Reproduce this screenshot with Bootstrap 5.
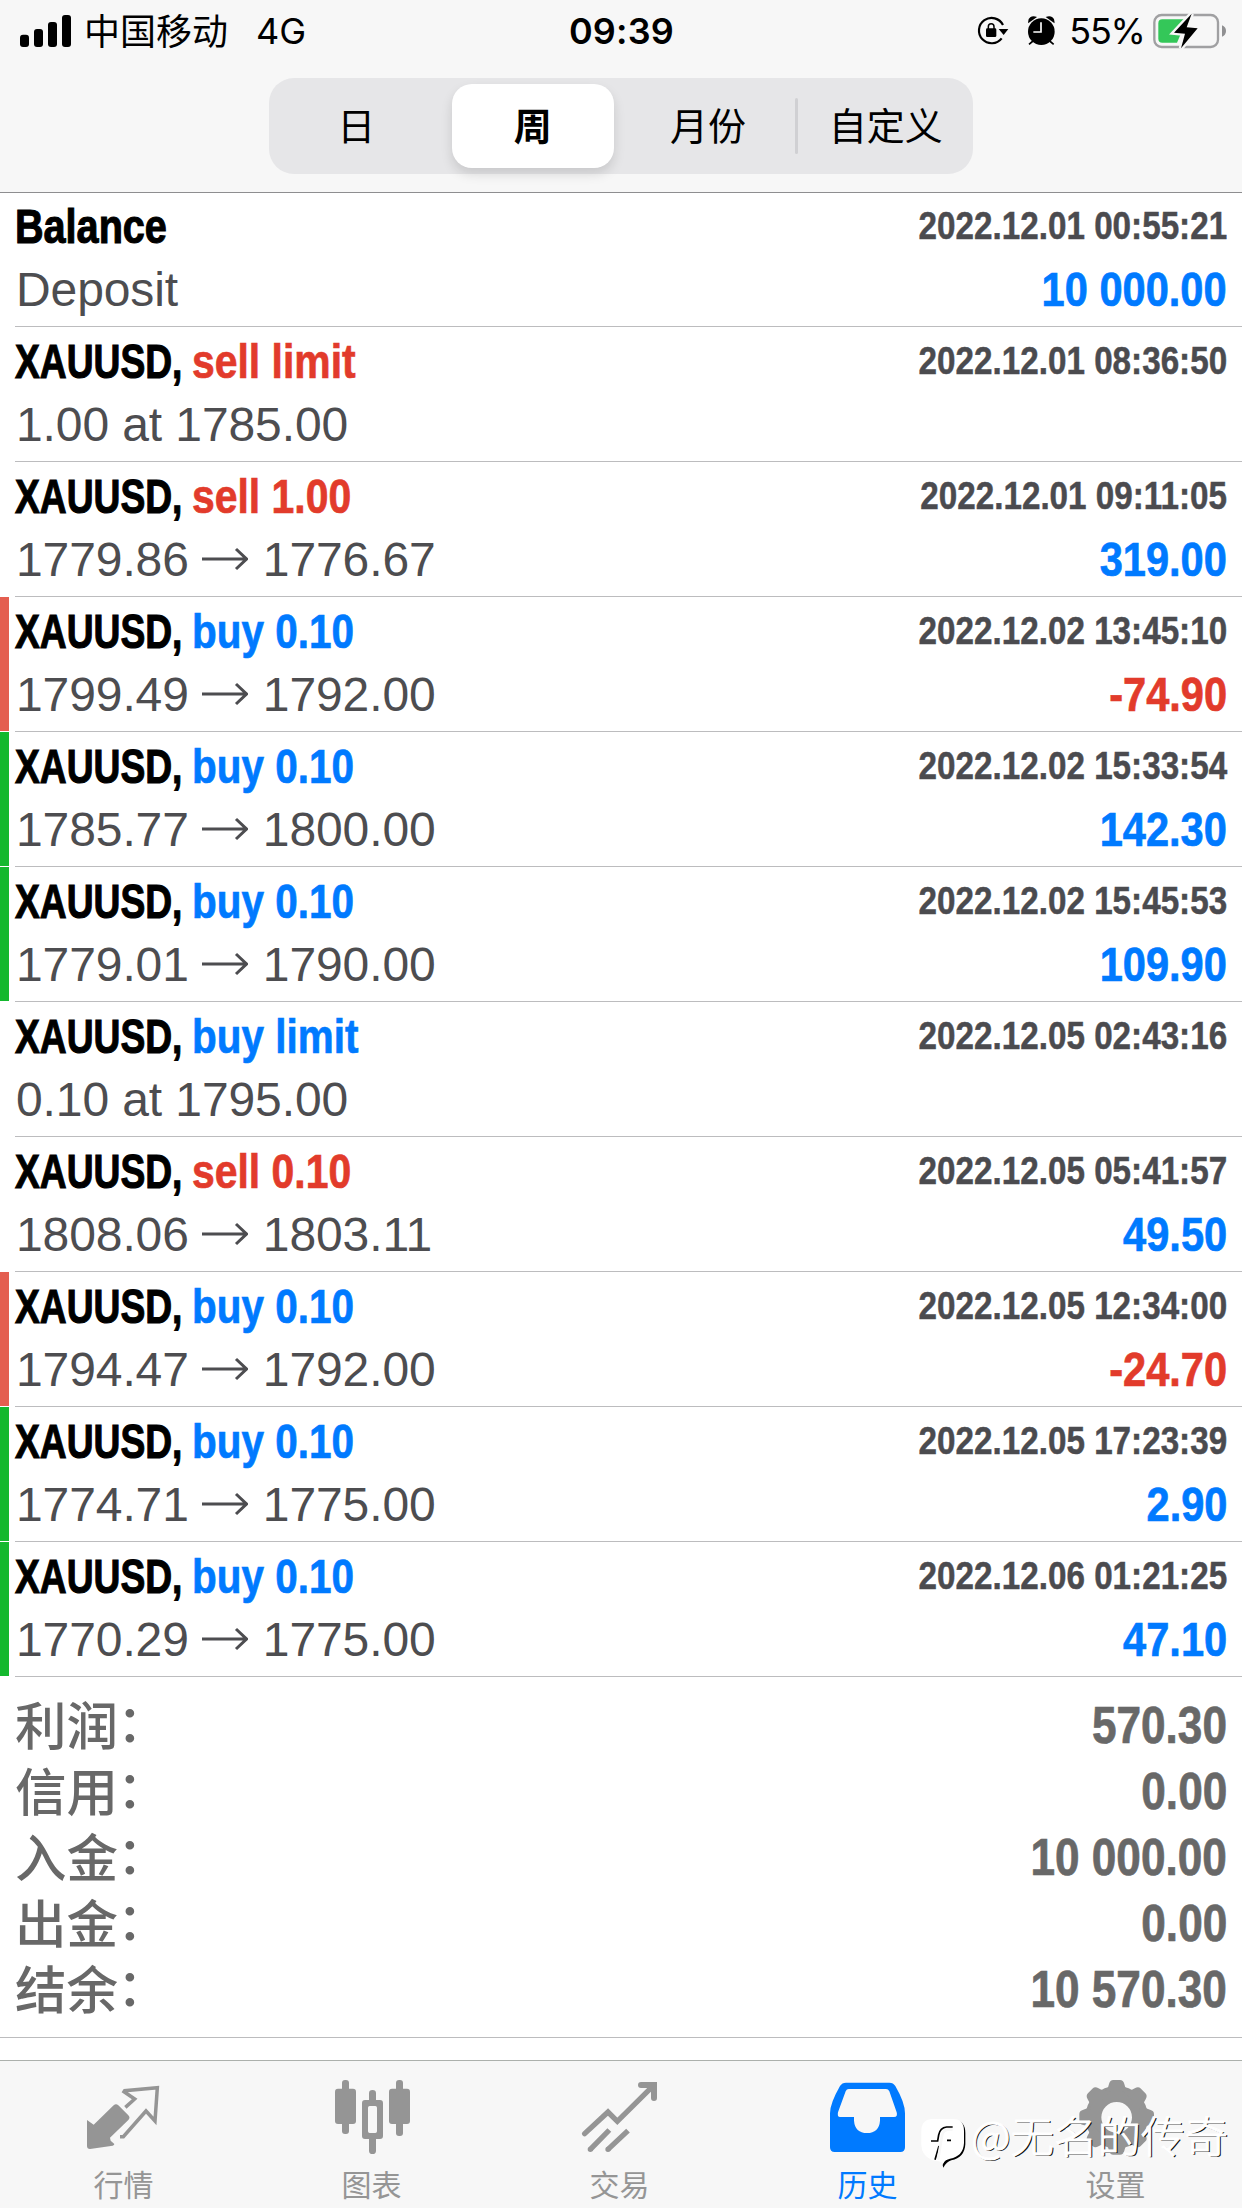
<!DOCTYPE html>
<html lang="zh-CN">
<head>
<meta charset="utf-8">
<meta name="viewport" content="width=device-width, initial-scale=1">
<title>历史</title>
<link href="https://cdn.jsdelivr.net/npm/bootstrap@5.3.0/dist/css/bootstrap.min.css" rel="stylesheet">
<style>
  body { width: 1242px; height: 2208px; overflow: hidden; background: #fff; font-family: "Liberation Sans", "Noto Sans CJK SC", sans-serif; color: #000; }
  svg { display: block; flex: none; }
  .topbar { height: 193px; background: #f7f7f7; border-bottom: 1px solid #8e8e90; }
  .status { height: 62px; padding: 0 15px 0 20px; font: 400 36px/62px Inter, "Noto Sans CJK SC", sans-serif; }
  .carrier { font-family: "Noto Sans CJK SC", sans-serif; line-height: 58px; height: 62px; width: 156px; padding-left: 12px; white-space: nowrap; }
  .clock { font-weight: 600; width: 120px; text-align: center; letter-spacing: .2px; margin-right: 4px; }
  .pct { width: 82px; text-align: center; letter-spacing: -1.2px; margin-left: 9px; }
  .segments { width: 704px; height: 96px; margin: 16px 0 0 269px; background: #e6e6e8; border-radius: 25px; padding: 6px 0; font: 400 38px/80px "Noto Sans CJK SC", sans-serif; }
  .segments > div { text-align: center; }
  .seg { height: 84px; width: 175px; }
  .seg-on { width: 162px; height: 84px; margin: 0 7px 0 8px; border-radius: 20px; background: #fff; font-weight: 600; box-shadow: 0 6px 12px rgba(0,0,0,.13); }
  .divider { width: 3px; height: 56px; background: #d0d0d3; border-radius: 2px; }
  .history { margin-top: -1px; }
  .deal { height: 135px; }
  .flag { width: 9px; height: 134px; margin-right: 6px; padding: 0; }
  .flag.loss { background: #e45e50; }
  .flag.win { background: #14b82e; }
  .deal-body { border-bottom: 1px solid #bcbcbe; padding: 3px 15px 0 0; }
  .line1, .line2 { height: 63px; line-height: 63px; white-space: nowrap; font-size: 48px; }
  .cond { font-weight: 700; display: inline-block; transform-origin: 0 50%; transform: scaleX(.852); -webkit-text-stroke: .7px currentColor; }
  .sym { width: 177px; transform: scaleX(.775); -webkit-text-stroke-width: 1.1px; }
  .bal { transform: scaleX(.825); -webkit-text-stroke-width: 1.1px; }
  .cond.up:not(.amount) { transform: scaleX(.843); }
  .when { font-size: 39px; line-height: 61px; color: #4b4b4f; transform-origin: 100% 50%; -webkit-text-stroke-width: .5px; }
  .price { color: #4d4d50; padding-left: 1px; letter-spacing: -.1px; }
  .price svg { display: inline-block; vertical-align: baseline; margin: 0 15px 0 13px; }
  .sum-val, .amount { transform-origin: 100% 50%; transform: scaleX(.866); }
  .amount { font-size: 48px; }
  .up { color: #007aff; }
  .down { color: #e23b2b; }
  .totals { padding: 16px 15px 14px 15px; border-bottom: 1px solid #bcbcbe; color: #686868; font-size: 51px; line-height: 66px; height: 361px; }
  .totals .tag { font: 500 51.5px/60px "Noto Sans CJK SC", sans-serif; height: 66px; }
  .totals .colon { vertical-align: 3px; line-height: 0; margin-left: -1px; }
  .spacer { height: 22px; }
  .tabs { height: 148px; border-top: 1px solid #acb0ac; background: #f7f7f7; padding-right: 2px; color: #959595; }
  .tabs .tab-name { font: 400 30px/34px "Noto Sans CJK SC", sans-serif; padding-right: 1px; }
  .stamp { left: 912px; top: 2105px; height: 70px; }
  .stamp-text { font: 300 43.5px/60px "Noto Sans CJK SC", sans-serif; color: #fff; -webkit-text-stroke: 1px #fff; text-shadow: 1.3px 1.3px 0 #111; margin-left: -9px; }
</style>
<script src="https://cdn.jsdelivr.net/npm/bootstrap@5.3.0/dist/js/bootstrap.bundle.min.js"></script>
</head>
<body class="position-relative d-flex flex-column">
<svg width="0" height="0" class="position-absolute"><defs>
  <symbol id="arrow" viewBox="0 0 46 24"><path d="M0 12H44M34 2L44.500 12L34 22" fill="none" stroke="#4d4d50" stroke-width="3"/></symbol>
</defs></svg>

<header class="topbar">
  <div class="status d-flex align-items-center">
    <div class="d-flex align-items-center" style="flex:1 1 0">
      <svg width="52" height="32" viewBox="60 42 156 96"><rect x="60" y="101" width="27" height="37" rx="9"/><rect x="102" y="84" width="27" height="54" rx="9"/><rect x="144" y="63" width="27" height="75" rx="9"/><rect x="186" y="42" width="27" height="96" rx="9"/></svg>
      <span class="carrier">中国移动</span><span class="ms-4 ps-1">4G</span>
    </div>
    <div class="clock">09:39</div>
    <div class="d-flex align-items-center justify-content-end" style="flex:1 1 0">
      <svg class="me-3" width="33" height="32" viewBox="468 48 99 96"><path d="M549 78A38 38 0 1 0 545 118" fill="none" stroke="#000" stroke-width="6.500"/><path d="M536 90h29l-14 18z"/><rect x="498" y="88" width="31" height="26" rx="4"/><path d="M505 90v-7a8.500 8.500 0 0 1 17 0v7" fill="none" stroke="#000" stroke-width="4.500"/></svg>
      <svg width="32" height="32" viewBox="612 46 96 96"><circle cx="661" cy="96" r="40"/><path d="M624 66c0-10 8-15 18-13zM698 66c0-10-8-15-18-13zM636 124l-12 10M686 124l12 10" stroke="#000" stroke-width="5"/><path d="M660 68v29h-23" fill="none" stroke="#fff" stroke-width="5"/></svg>
      <span class="pct">55%</span>
      <svg class="ms-1" width="75" height="36" viewBox="996 36 225 108"><rect x="1003" y="42" width="191" height="96" rx="22" fill="none" stroke="#a0a0a2" stroke-width="7"/><path d="M1015 67q0-12 12-12h74l-30 70h-44q-12 0-12-12z" fill="#34c759"/><path d="M1206 73q12 5 12 17t-12 17z" fill="#909092"/><path d="M1115 38L1062 95L1095 98L1083 142L1133 82L1100 79Z" stroke="#f7f7f7" stroke-width="14"/><path d="M1115 38L1062 95L1095 98L1083 142L1133 82L1100 79Z"/></svg>
    </div>
  </div>
  <div class="segments d-flex align-items-center">
    <div class="seg">日</div>
    <div class="seg-on">周</div>
    <div class="seg">月份</div>
    <div class="divider"></div>
    <div class="seg">自定义</div>
  </div>
</header>

<main class="history">
  <div class="deal d-flex"><div class="flag"></div><div class="deal-body flex-grow-1">
    <div class="line1 d-flex justify-content-between"><span class="cond bal">Balance</span><span class="cond when">2022.12.01 00:55:21</span></div>
    <div class="line2 d-flex justify-content-between"><span class="price">Deposit</span><span class="cond amount up">10 000.00</span></div></div></div>
  <div class="deal d-flex"><div class="flag"></div><div class="deal-body flex-grow-1">
    <div class="line1 d-flex"><span class="cond sym">XAUUSD,</span><span class="cond down">sell limit</span><span class="cond when ms-auto">2022.12.01 08:36:50</span></div>
    <div class="line2"><span class="price">1.00 at 1785.00</span></div></div></div>
  <div class="deal d-flex"><div class="flag"></div><div class="deal-body flex-grow-1">
    <div class="line1 d-flex"><span class="cond sym">XAUUSD,</span><span class="cond down">sell 1.00</span><span class="cond when ms-auto">2022.12.01 09:11:05</span></div>
    <div class="line2 d-flex justify-content-between"><span class="price">1779.86<svg width="46" height="29" viewBox="0 0 46 29"><use href="#arrow" width="46" height="24"/></svg>1776.67</span><span class="cond amount up">319.00</span></div></div></div>
  <div class="deal d-flex"><div class="flag loss"></div><div class="deal-body flex-grow-1">
    <div class="line1 d-flex"><span class="cond sym">XAUUSD,</span><span class="cond up">buy 0.10</span><span class="cond when ms-auto">2022.12.02 13:45:10</span></div>
    <div class="line2 d-flex justify-content-between"><span class="price">1799.49<svg width="46" height="29" viewBox="0 0 46 29"><use href="#arrow" width="46" height="24"/></svg>1792.00</span><span class="cond amount down">-74.90</span></div></div></div>
  <div class="deal d-flex"><div class="flag win"></div><div class="deal-body flex-grow-1">
    <div class="line1 d-flex"><span class="cond sym">XAUUSD,</span><span class="cond up">buy 0.10</span><span class="cond when ms-auto">2022.12.02 15:33:54</span></div>
    <div class="line2 d-flex justify-content-between"><span class="price">1785.77<svg width="46" height="29" viewBox="0 0 46 29"><use href="#arrow" width="46" height="24"/></svg>1800.00</span><span class="cond amount up">142.30</span></div></div></div>
  <div class="deal d-flex"><div class="flag win"></div><div class="deal-body flex-grow-1">
    <div class="line1 d-flex"><span class="cond sym">XAUUSD,</span><span class="cond up">buy 0.10</span><span class="cond when ms-auto">2022.12.02 15:45:53</span></div>
    <div class="line2 d-flex justify-content-between"><span class="price">1779.01<svg width="46" height="29" viewBox="0 0 46 29"><use href="#arrow" width="46" height="24"/></svg>1790.00</span><span class="cond amount up">109.90</span></div></div></div>
  <div class="deal d-flex"><div class="flag"></div><div class="deal-body flex-grow-1">
    <div class="line1 d-flex"><span class="cond sym">XAUUSD,</span><span class="cond up">buy limit</span><span class="cond when ms-auto">2022.12.05 02:43:16</span></div>
    <div class="line2"><span class="price">0.10 at 1795.00</span></div></div></div>
  <div class="deal d-flex"><div class="flag"></div><div class="deal-body flex-grow-1">
    <div class="line1 d-flex"><span class="cond sym">XAUUSD,</span><span class="cond down">sell 0.10</span><span class="cond when ms-auto">2022.12.05 05:41:57</span></div>
    <div class="line2 d-flex justify-content-between"><span class="price">1808.06<svg width="46" height="29" viewBox="0 0 46 29"><use href="#arrow" width="46" height="24"/></svg>1803.11</span><span class="cond amount up">49.50</span></div></div></div>
  <div class="deal d-flex"><div class="flag loss"></div><div class="deal-body flex-grow-1">
    <div class="line1 d-flex"><span class="cond sym">XAUUSD,</span><span class="cond up">buy 0.10</span><span class="cond when ms-auto">2022.12.05 12:34:00</span></div>
    <div class="line2 d-flex justify-content-between"><span class="price">1794.47<svg width="46" height="29" viewBox="0 0 46 29"><use href="#arrow" width="46" height="24"/></svg>1792.00</span><span class="cond amount down">-24.70</span></div></div></div>
  <div class="deal d-flex"><div class="flag win"></div><div class="deal-body flex-grow-1">
    <div class="line1 d-flex"><span class="cond sym">XAUUSD,</span><span class="cond up">buy 0.10</span><span class="cond when ms-auto">2022.12.05 17:23:39</span></div>
    <div class="line2 d-flex justify-content-between"><span class="price">1774.71<svg width="46" height="29" viewBox="0 0 46 29"><use href="#arrow" width="46" height="24"/></svg>1775.00</span><span class="cond amount up">2.90</span></div></div></div>
  <div class="deal d-flex"><div class="flag win"></div><div class="deal-body flex-grow-1">
    <div class="line1 d-flex"><span class="cond sym">XAUUSD,</span><span class="cond up">buy 0.10</span><span class="cond when ms-auto">2022.12.06 01:21:25</span></div>
    <div class="line2 d-flex justify-content-between"><span class="price">1770.29<svg width="46" height="29" viewBox="0 0 46 29"><use href="#arrow" width="46" height="24"/></svg>1775.00</span><span class="cond amount up">47.10</span></div></div></div>
</main>

<section class="totals">
  <div class="d-flex justify-content-between"><span class="tag">利润<span class="colon">：</span></span><span class="cond sum-val">570.30</span></div>
  <div class="d-flex justify-content-between"><span class="tag">信用<span class="colon">：</span></span><span class="cond sum-val">0.00</span></div>
  <div class="d-flex justify-content-between"><span class="tag">入金<span class="colon">：</span></span><span class="cond sum-val">10 000.00</span></div>
  <div class="d-flex justify-content-between"><span class="tag">出金<span class="colon">：</span></span><span class="cond sum-val">0.00</span></div>
  <div class="d-flex justify-content-between"><span class="tag">结余<span class="colon">：</span></span><span class="cond sum-val">10 570.30</span></div>
</section>
<div class="spacer"></div>

<nav class="tabs d-flex">
  <div class="col d-flex flex-column align-items-center">
    <svg width="80" height="105" viewBox="252 63 240 315" fill="#959595"><path d="M261 240L281 254L341 196Q348 189 355 196L385 226Q392 233 385 240L330 293L332 302L343 312Q343 316 338 317L270 327Q261 327 261 318Z"/><path d="M376 202L404 177L372 155L374 152L472 143L465 243L438 213L370 290H360" fill="none" stroke="#959595" stroke-width="10.500"/></svg>
    <span class="tab-name">行情</span></div>
  <div class="col d-flex flex-column align-items-center">
    <svg width="80" height="105" viewBox="996 63 240 315" fill="#959595"><rect x="1005" y="146" width="63" height="106" rx="9"/><rect x="1026" y="120" width="21" height="162" rx="9"/><rect x="1167" y="146" width="63" height="106" rx="9"/><rect x="1188" y="120" width="21" height="168" rx="9"/><path fill-rule="evenodd" d="M1095 180h45q9 0 9 9v99q0 9-9 9h-45q-9 0-9-9v-99q0-9 9-9zM1109 198q-5 0-5 5v71q0 5 5 5h17q5 0 5-5v-71q0-5-5-5z"/><path d="M1107 182v-22q0-10 10.500-10t10.500 10v22zM1107 295v37q0 10 10.500 10t10.500-10v-37z"/></svg>
    <span class="tab-name">图表</span></div>
  <div class="col d-flex flex-column align-items-center">
    <svg width="80" height="105" viewBox="120 63 240 315" fill="none" stroke="#959595"><path d="M134 281L204 216L232 244L340 137" stroke-width="16" stroke-linecap="round"/><path d="M303 135H342V174" stroke-width="18" stroke-linecap="round"/><path d="M151 328L208 270M204 328L264 272" stroke-width="16"/><path d="M151 328h.1M204 328h.1" stroke-width="16" stroke-linecap="round"/></svg>
    <span class="tab-name">交易</span></div>
  <div class="col d-flex flex-column align-items-center up">
    <svg width="80" height="105" viewBox="864 63 240 315" fill="#007aff"><path fill-rule="evenodd" d="M918 128H1048Q1060 128 1066 138Q1095 188 1095 220V322Q1095 336 1081 336H884Q870 336 870 322V220Q870 190 900 138Q906 128 918 128ZM926 147Q920 147 917 154L894 217Q891 231 900 231H942V242Q945 279 981 279Q1017 279 1020 242V231H1062Q1074 231 1070 217L1048 154Q1045 147 1038 147Z"/></svg>
    <span class="tab-name">历史</span></div>
  <div class="col d-flex flex-column align-items-center">
    <svg width="80" height="105" viewBox="588 63 240 315" fill="#959595"><defs><path id="tooth" d="M668 164Q684 148 687 132Q690 120 700 120H720Q730 120 733 132Q736 148 752 164Z"/></defs><circle cx="710" cy="232" r="70" fill="none" stroke="#959595" stroke-width="48"/><g><use href="#tooth"/><use href="#tooth" transform="rotate(45 710 232)"/><use href="#tooth" transform="rotate(90 710 232)"/><use href="#tooth" transform="rotate(135 710 232)"/><use href="#tooth" transform="rotate(180 710 232)"/><use href="#tooth" transform="rotate(225 710 232)"/><use href="#tooth" transform="rotate(270 710 232)"/><use href="#tooth" transform="rotate(315 710 232)"/></g></svg>
    <span class="tab-name">设置</span></div>
</nav>

<div class="stamp position-absolute d-flex">
  <svg width="68" height="70" viewBox="0 0 204 210"><path d="M62 46H128Q160 48 160 84V118Q158 158 118 166Q104 170 94 188L92 180Q98 160 112 158L60 162Z" fill="#000"/><path d="M62 42H124Q156 42 156 78V114Q154 154 114 161Q100 164 94 174Q80 166 60 166Q28 150 28 120V78Q28 42 62 42Z" fill="#fff"/><path d="M122 66H104Q84 68 80 90L77 108H57M81 123L69 164M105 106H117" fill="none" stroke="#000" stroke-width="5"/><path d="M122 74Q94 70 90 92L78 164" fill="none" stroke="#f7f7f7" stroke-width="8"/></svg>
  <span class="stamp-text">@无名的传奇</span>
</div>
</body>
</html>
